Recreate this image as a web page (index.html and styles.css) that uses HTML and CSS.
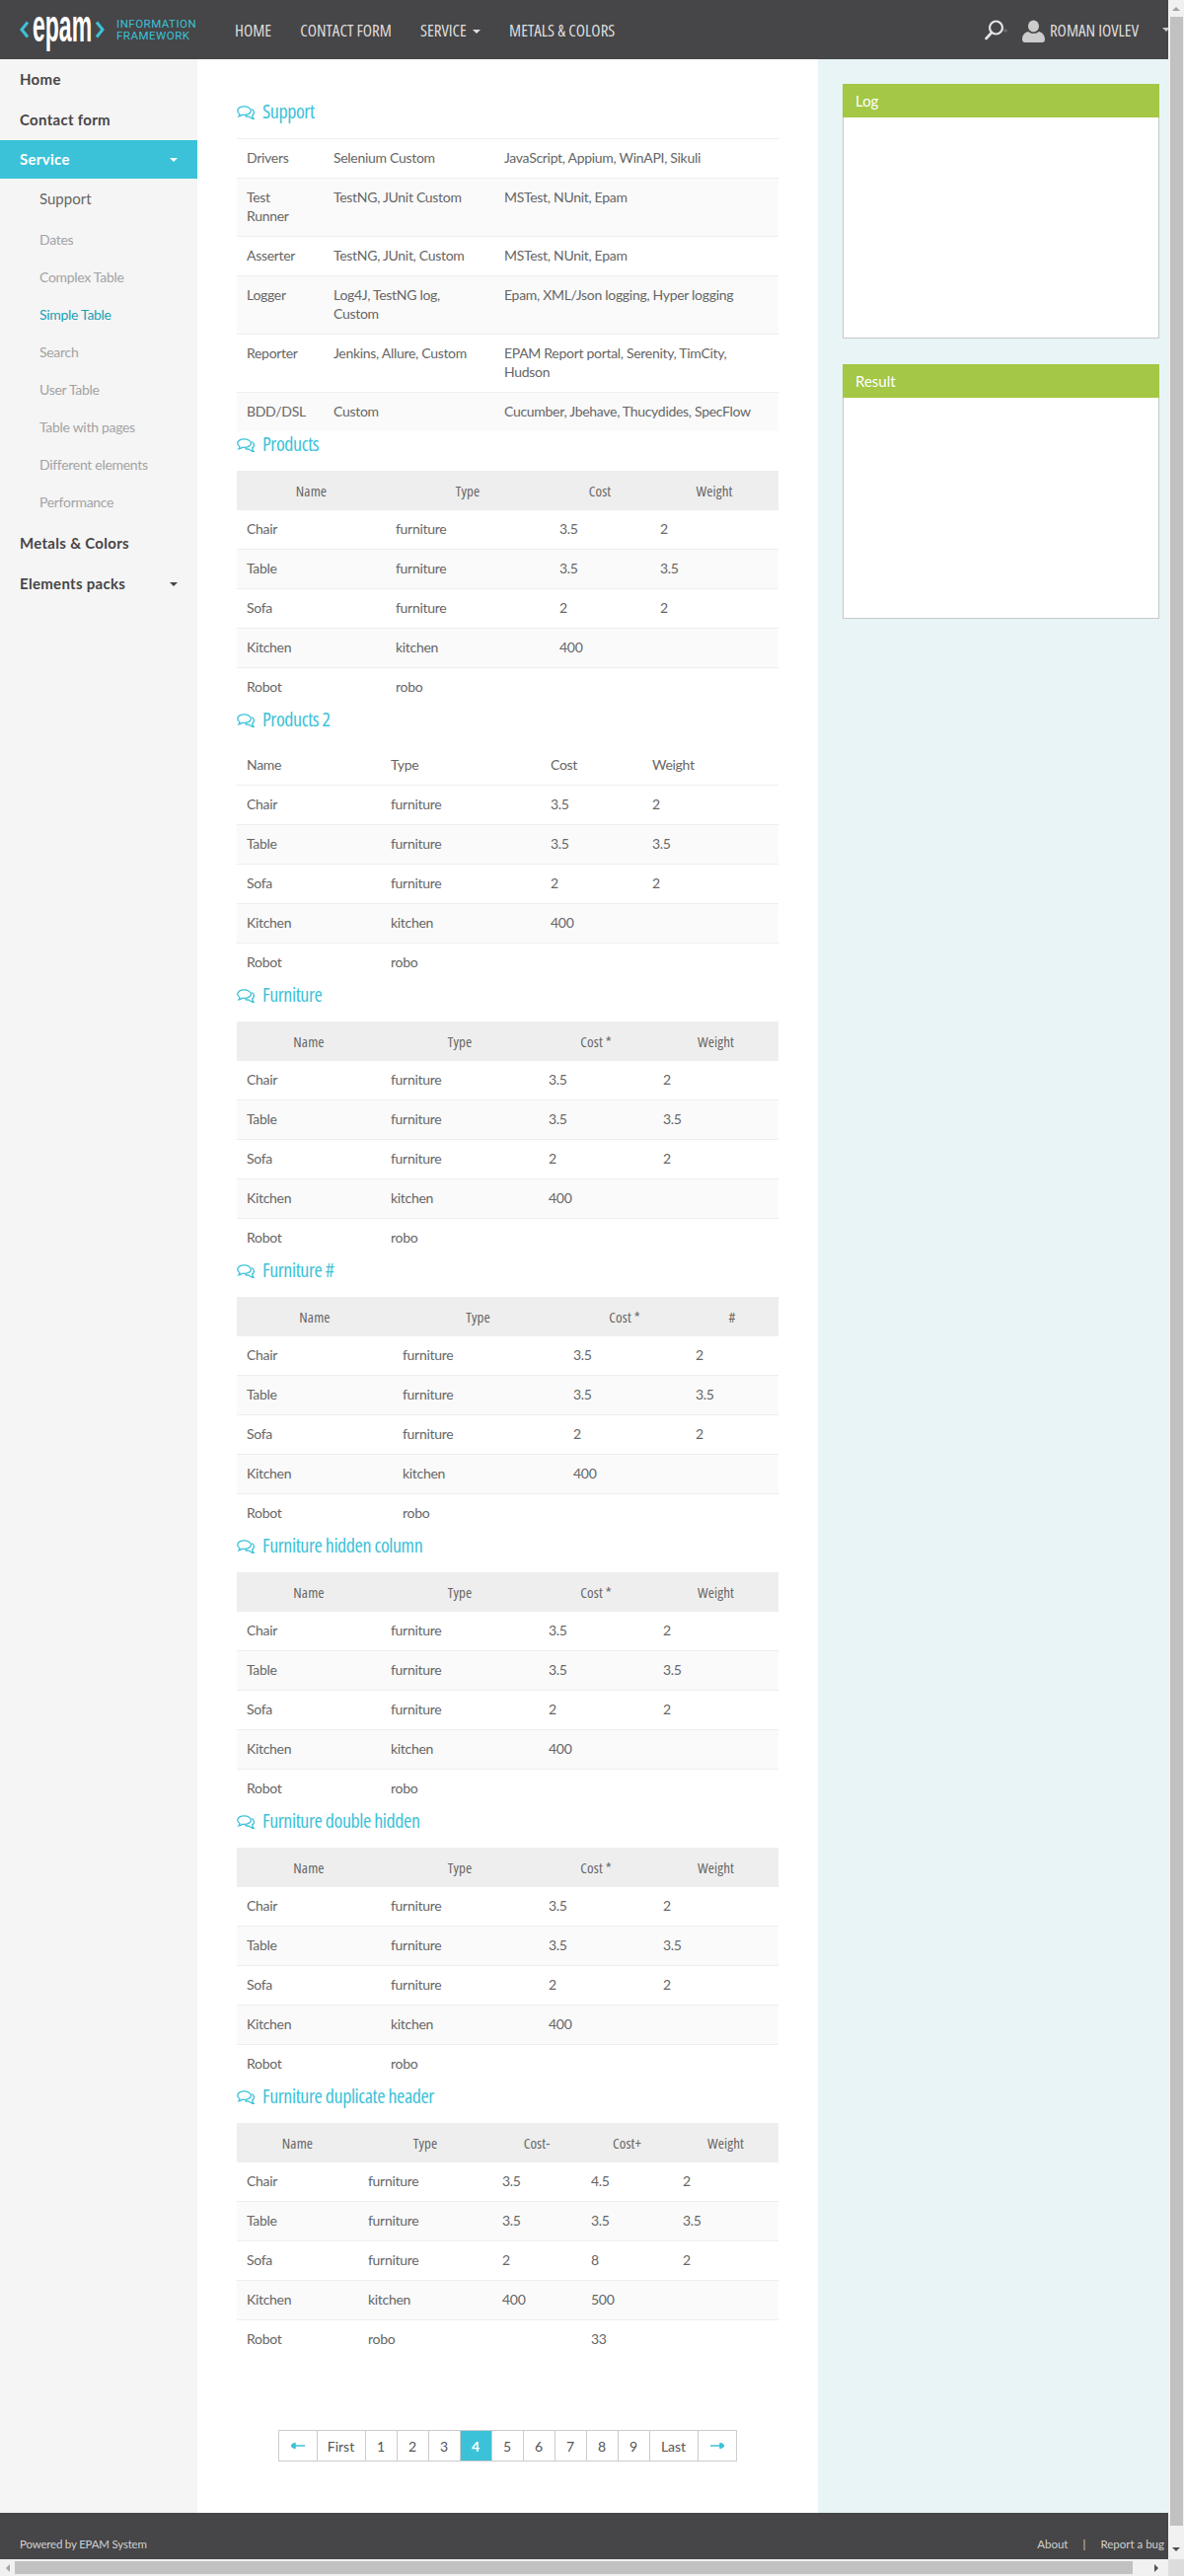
FILE: index.html
```html
<!DOCTYPE html>
<html lang="en">
<head>
    <meta charset="UTF-8">
    <meta name="viewport" content="width=device-width, initial-scale=1.0">
    <title>Simple Table</title>
    <link rel="stylesheet" href="styles.css">
</head>
<body>
<svg class="defs" aria-hidden="true">
    <symbol id="comments" viewBox="0 0 18 14">
        <path d="M7.5 0.8C3.6 0.8 0.7 2.800 0.7 5.200c0 1.300 0.900 2.500 2.300 3.300-0.100 0.900-0.500 1.700-1.100 2.400 1.500-0.200 2.800-0.800 3.700-1.600 0.600 0.100 1.200 0.100 1.900 0.100 3.900 0 6.900-2 6.900-4.200S11.400 0.800 7.500 0.800z" fill="none" stroke="currentColor" stroke-width="1.300"/>
        <path d="M15.200 3.500c1.500 0.900 2.200 2.200 2.200 3.500 0 1.300-0.700 2.400-1.800 3.100 0.100 1.200 0.600 2.300 1.400 3.200-1.900-0.100-3.500-1-4.400-2.200-1.400 0.200-2.900 0-4.100-0.700" fill="none" stroke="currentColor" stroke-width="1.300"/>
    </symbol>
</svg>
<div class="window">
    <div class="page">
        <header class="topbar">
            <div class="logo">
                <svg class="chevron" viewBox="0 0 9 18"><path d="M8 1.500 2 9l6 7.500" fill="none" stroke="#3bc2d8" stroke-width="3"/></svg>
                <span class="logo-box"><span class="logo-word">epam</span></span>
                <svg class="chevron" viewBox="0 0 9 18"><path d="M1 1.500 7 9l-6 7.500" fill="none" stroke="#3bc2d8" stroke-width="3"/></svg>
                <span class="logo-sub">INFORMATION<br>FRAMEWORK</span>
            </div>
            <nav class="topnav">
                <a href="#">Home</a>
                <a href="#">Contact form</a>
                <a href="#">Service <i class="caret"></i></a>
                <a href="#">Metals &amp; Colors</a>
            </nav>
            <div class="topright">
                <svg class="search-icon" viewBox="0 0 23 21">
                    <circle cx="11.500" cy="8" r="6.500" fill="none" stroke="#e4e4e4" stroke-width="2.200"/>
                    <path d="M7 13 1.500 19" stroke="#e4e4e4" stroke-width="2.600" stroke-linecap="round"/>
                    <circle cx="21" cy="11" r="1.800" fill="#6b6b6b"/>
                </svg>
                <svg class="user-icon" viewBox="0 0 23 23">
                    <ellipse cx="11.500" cy="6.500" rx="5.500" ry="6" fill="#ccc"/>
                    <path d="M0 20c0-4.500 2.500-7 6-8 3 2.500 8 2.500 11 0 3.500 1 6 3.500 6 8 0 1.800-1 3-3 3H3c-2 0-3-1.200-3-3z" fill="#ccc"/>
                </svg>
                <span class="user-name">Roman Iovlev</span>
                <i class="caret user-caret"></i>
            </div>
        </header>

        <div class="columns">
            <aside class="sidebar">
                <a class="side-link" href="#">Home</a>
                <a class="side-link" href="#">Contact form</a>
                <a class="side-link active" href="#">Service <i class="caret"></i></a>
                <a class="sub-head" href="#">Support</a>
                <div class="sub-list">
                    <a href="#">Dates</a>
                    <a href="#">Complex Table</a>
                    <a class="current" href="#">Simple Table</a>
                    <a href="#">Search</a>
                    <a href="#">User Table</a>
                    <a href="#">Table with pages</a>
                    <a href="#">Different elements</a>
                    <a href="#">Performance</a>
                </div>
                <a class="side-link" href="#">Metals &amp; Colors</a>
                <a class="side-link" href="#">Elements packs <i class="caret"></i></a>
            </aside>

            <main class="content">
                <h2 class="title"><svg><use href="#comments"/></svg>Support</h2>
                <table class="grid support">
                    <colgroup><col><col><col></colgroup>
                    <tbody>
                        <tr><td>Drivers</td><td>Selenium Custom</td><td>JavaScript, Appium, WinAPI, Sikuli</td></tr>
                        <tr><td>Test Runner</td><td>TestNG, JUnit Custom</td><td>MSTest, NUnit, Epam</td></tr>
                        <tr><td>Asserter</td><td>TestNG, JUnit, Custom</td><td>MSTest, NUnit, Epam</td></tr>
                        <tr><td>Logger</td><td>Log4J, TestNG log, Custom</td><td>Epam, XML/Json logging, Hyper logging</td></tr>
                        <tr><td>Reporter</td><td>Jenkins, Allure, Custom</td><td>EPAM Report portal, Serenity, TimCity, Hudson</td></tr>
                        <tr><td>BDD/DSL</td><td>Custom</td><td>Cucumber, Jbehave, Thucydides, SpecFlow</td></tr>
                    </tbody>
                </table>

                <h2 class="title"><svg><use href="#comments"/></svg>Products</h2>
                <table class="grid products">
                    <colgroup><col><col><col><col></colgroup>
                    <thead><tr><th>Name</th><th>Type</th><th>Cost</th><th>Weight</th></tr></thead>
                    <tbody>
                        <tr><td>Chair</td><td>furniture</td><td>3.5</td><td>2</td></tr>
                        <tr><td>Table</td><td>furniture</td><td>3.5</td><td>3.5</td></tr>
                        <tr><td>Sofa</td><td>furniture</td><td>2</td><td>2</td></tr>
                        <tr><td>Kitchen</td><td>kitchen</td><td>400</td><td></td></tr>
                        <tr><td>Robot</td><td>robo</td><td></td><td></td></tr>
                    </tbody>
                </table>

                <h2 class="title"><svg><use href="#comments"/></svg>Products 2</h2>
                <table class="grid products-two">
                    <colgroup><col><col><col><col></colgroup>
                    <tbody>
                        <tr class="plain-head"><td>Name</td><td>Type</td><td>Cost</td><td>Weight</td></tr>
                    </tbody>
                    <tbody>
                        <tr><td>Chair</td><td>furniture</td><td>3.5</td><td>2</td></tr>
                        <tr><td>Table</td><td>furniture</td><td>3.5</td><td>3.5</td></tr>
                        <tr><td>Sofa</td><td>furniture</td><td>2</td><td>2</td></tr>
                        <tr><td>Kitchen</td><td>kitchen</td><td>400</td><td></td></tr>
                        <tr><td>Robot</td><td>robo</td><td></td><td></td></tr>
                    </tbody>
                </table>

                <h2 class="title"><svg><use href="#comments"/></svg>Furniture</h2>
                <table class="grid furniture">
                    <colgroup><col><col><col><col></colgroup>
                    <thead><tr><th>Name</th><th>Type</th><th>Cost *</th><th>Weight</th></tr></thead>
                    <tbody>
                        <tr><td>Chair</td><td>furniture</td><td>3.5</td><td>2</td></tr>
                        <tr><td>Table</td><td>furniture</td><td>3.5</td><td>3.5</td></tr>
                        <tr><td>Sofa</td><td>furniture</td><td>2</td><td>2</td></tr>
                        <tr><td>Kitchen</td><td>kitchen</td><td>400</td><td></td></tr>
                        <tr><td>Robot</td><td>robo</td><td></td><td></td></tr>
                    </tbody>
                </table>

                <h2 class="title"><svg><use href="#comments"/></svg>Furniture #</h2>
                <table class="grid furniture-num">
                    <colgroup><col><col><col><col></colgroup>
                    <thead><tr><th>Name</th><th>Type</th><th>Cost *</th><th>#</th></tr></thead>
                    <tbody>
                        <tr><td>Chair</td><td>furniture</td><td>3.5</td><td>2</td></tr>
                        <tr><td>Table</td><td>furniture</td><td>3.5</td><td>3.5</td></tr>
                        <tr><td>Sofa</td><td>furniture</td><td>2</td><td>2</td></tr>
                        <tr><td>Kitchen</td><td>kitchen</td><td>400</td><td></td></tr>
                        <tr><td>Robot</td><td>robo</td><td></td><td></td></tr>
                    </tbody>
                </table>

                <h2 class="title"><svg><use href="#comments"/></svg>Furniture hidden column</h2>
                <table class="grid furniture">
                    <colgroup><col><col><col><col></colgroup>
                    <thead><tr><th>Name</th><th>Type</th><th>Cost *</th><th>Weight</th></tr></thead>
                    <tbody>
                        <tr><td>Chair</td><td>furniture</td><td>3.5</td><td>2</td></tr>
                        <tr><td>Table</td><td>furniture</td><td>3.5</td><td>3.5</td></tr>
                        <tr><td>Sofa</td><td>furniture</td><td>2</td><td>2</td></tr>
                        <tr><td>Kitchen</td><td>kitchen</td><td>400</td><td></td></tr>
                        <tr><td>Robot</td><td>robo</td><td></td><td></td></tr>
                    </tbody>
                </table>

                <h2 class="title"><svg><use href="#comments"/></svg>Furniture double hidden</h2>
                <table class="grid furniture">
                    <colgroup><col><col><col><col></colgroup>
                    <thead><tr><th>Name</th><th>Type</th><th>Cost *</th><th>Weight</th></tr></thead>
                    <tbody>
                        <tr><td>Chair</td><td>furniture</td><td>3.5</td><td>2</td></tr>
                        <tr><td>Table</td><td>furniture</td><td>3.5</td><td>3.5</td></tr>
                        <tr><td>Sofa</td><td>furniture</td><td>2</td><td>2</td></tr>
                        <tr><td>Kitchen</td><td>kitchen</td><td>400</td><td></td></tr>
                        <tr><td>Robot</td><td>robo</td><td></td><td></td></tr>
                    </tbody>
                </table>

                <h2 class="title"><svg><use href="#comments"/></svg>Furniture duplicate header</h2>
                <table class="grid duplicate">
                    <colgroup><col><col><col><col><col></colgroup>
                    <thead><tr><th>Name</th><th>Type</th><th>Cost-</th><th>Cost+</th><th>Weight</th></tr></thead>
                    <tbody>
                        <tr><td>Chair</td><td>furniture</td><td>3.5</td><td>4.5</td><td>2</td></tr>
                        <tr><td>Table</td><td>furniture</td><td>3.5</td><td>3.5</td><td>3.5</td></tr>
                        <tr><td>Sofa</td><td>furniture</td><td>2</td><td>8</td><td>2</td></tr>
                        <tr><td>Kitchen</td><td>kitchen</td><td>400</td><td>500</td><td></td></tr>
                        <tr><td>Robot</td><td>robo</td><td></td><td>33</td><td></td></tr>
                    </tbody>
                </table>

                <ul class="pager">
                    <li class="arrow"><svg viewBox="0 0 14 6"><path d="M14 3H3M4 0 0 3l4 3z" fill="#3bc2d8" stroke="#3bc2d8" stroke-width="1.500"/></svg></li>
                    <li class="word">First</li>
                    <li>1</li><li>2</li><li>3</li>
                    <li class="on">4</li>
                    <li>5</li><li>6</li><li>7</li><li>8</li><li>9</li>
                    <li class="word">Last</li>
                    <li class="arrow"><svg viewBox="0 0 14 6"><path d="M0 3h11M10 0l4 3-4 3z" fill="#3bc2d8" stroke="#3bc2d8" stroke-width="1.500"/></svg></li>
                </ul>
            </main>

            <aside class="rightbar">
                <section class="panel">
                    <h3>Log</h3>
                    <div class="panel-body"></div>
                </section>
                <section class="panel">
                    <h3>Result</h3>
                    <div class="panel-body"></div>
                </section>
            </aside>
        </div>

        <footer class="bottombar">
            <span>Powered by EPAM System</span>
            <span class="foot-links"><a href="#">About</a><b>|</b><a href="#">Report a bug</a></span>
        </footer>
    </div>

    <div class="vscroll">
        <i class="tri up"></i>
        <div class="vthumb"></div>
        <i class="tri down"></i>
    </div>
    <div class="hscroll">
        <i class="tri left"></i>
        <div class="hthumb"></div>
        <i class="tri right"></i>
    </div>
    <div class="corner"></div>
</div>
</body>
</html>
```

FILE: styles.css
```css
* {
    box-sizing: border-box;
}
html, body {
    margin: 0;
    padding: 0;
    height: 100%;
    overflow: hidden;
}
body {
    font-family: Lato, "Liberation Sans", sans-serif;
    font-size: 14px;
    line-height: 19px;
    letter-spacing: -0.3px;
    color: #666;
    background: #fff;
}
a {
    color: inherit;
    text-decoration: none;
}
.defs {
    display: none;
}
.window {
    display: grid;
    grid-template-columns: 1184px 16px;
    grid-template-rows: 2593px 17px;
    width: 1200px;
    height: 2610px;
}
.page {
    display: flex;
    flex-direction: column;
    overflow: hidden;
    min-width: 0;
}

/* top bar */
.topbar {
    display: flex;
    align-items: center;
    flex: 0 0 60px;
    background: #464547;
    font-family: "Open Sans", sans-serif;
    font-stretch: 75%;
    letter-spacing: 0;
}
.logo {
    display: flex;
    align-items: center;
    flex: 0 0 238px;
    padding-left: 20px;
}
.chevron {
    flex: none;
    width: 9px;
    height: 18px;
}
.logo-box {
    flex: none;
    width: 68px;
    height: 46px;
    margin-bottom: 8px;
    padding-left: 4px;
}
.logo-word {
    display: inline-block;
    font-family: "Liberation Sans", sans-serif;
    font-size: 46px;
    line-height: 46px;
    font-weight: 700;
    color: #fff;
    transform: scaleX(0.5);
    transform-origin: left center;
}
.logo-sub {
    margin-left: 12px;
    font-family: Roboto, sans-serif;
    font-stretch: 100%;
    font-size: 11.5px;
    line-height: 12px;
    letter-spacing: 0.5px;
    color: #3bc2d8;
}
.topnav {
    display: flex;
    gap: 29px;
    font-size: 17px;
    font-weight: 500;
    text-transform: uppercase;
    color: #ddd;
}
.caret {
    display: inline-block;
    width: 0;
    height: 0;
    margin-left: 3px;
    vertical-align: middle;
    border-top: 4px solid currentColor;
    border-left: 4px solid transparent;
    border-right: 4px solid transparent;
}
.topright {
    display: flex;
    align-items: center;
    margin-left: auto;
    color: #ddd;
}
.search-icon {
    width: 23px;
    height: 21px;
}
.user-icon {
    width: 23px;
    height: 23px;
    margin-left: 15px;
    margin-top: 3px;
}
.user-name {
    margin-left: 5px;
    font-size: 17px;
    font-weight: 500;
    text-transform: uppercase;
}
.user-caret {
    margin-left: 24px;
    margin-right: -2px;
    border-top-color: #ccc;
}

.columns {
    display: flex;
    flex: 1;
    min-height: 0;
}

/* left menu */
.sidebar {
    flex: 0 0 200px;
    background: #f5f5f5;
    display: flex;
    flex-direction: column;
}
.side-link {
    display: flex;
    align-items: center;
    justify-content: space-between;
    height: 41px;
    padding: 0 20px;
    font-size: 15px;
    font-weight: 700;
    letter-spacing: 0.3px;
    color: #464547;
}
.side-link.active {
    height: 39px;
    background: #3bc2d8;
    color: #fff;
}
.sub-head {
    display: flex;
    align-items: center;
    height: 43px;
    padding: 0 0 2px 40px;
    font-size: 15px;
    letter-spacing: 0;
    color: #666;
}
.sub-list {
    margin-bottom: 2px;
}
.sub-list a {
    display: flex;
    align-items: center;
    height: 38px;
    padding: 0 0 1px 40px;
    color: #a3a3a3;
}
.sub-list a.current {
    color: #1a9fb5;
}

/* main column */
.content {
    flex: 0 0 629px;
    padding: 40px 40px 0;
    background: #fff;
}
.title {
    display: flex;
    align-items: flex-start;
    height: 40px;
    margin: 0;
    font-family: "Open Sans", sans-serif;
    font-stretch: 75%;
    font-size: 20px;
    line-height: 26px;
    font-weight: 400;
    letter-spacing: -0.4px;
    color: #3bc2d8;
}
.title svg {
    flex: none;
    width: 18px;
    height: 14px;
    margin: 7px 8px 0 0;
}
.grid {
    width: 549px;
    table-layout: fixed;
    border-collapse: separate;
    border-spacing: 0;
}
.grid td {
    padding: 9px 10px 11px;
    vertical-align: top;
    border-top: 1px solid #eee;
}
.grid tbody tr:first-child td {
    border-top: 0;
}
.grid tbody tr:nth-child(even) td {
    background: #fafafa;
}
.grid th {
    height: 40px;
    padding: 10px;
    font-family: "Open Sans", sans-serif;
    font-stretch: 75%;
    font-size: 15px;
    font-weight: 500;
    line-height: 20px;
    letter-spacing: 0.1px;
    color: #666;
    background: #eee;
}
.support tbody tr:first-child td {
    border-top: 1px solid #eee;
}
.products-two .plain-head td {
    background: none;
}
.products-two tbody + tbody tr:first-child td {
    border-top: 1px solid #eee;
}
.support col:nth-child(1) { width: 88px; }
.support col:nth-child(2) { width: 173px; }
.products col:nth-child(1) { width: 151px; }
.products col:nth-child(2) { width: 166px; }
.products col:nth-child(3) { width: 102px; }
.products-two col:nth-child(1) { width: 146px; }
.products-two col:nth-child(2) { width: 162px; }
.products-two col:nth-child(3) { width: 103px; }
.furniture col:nth-child(1) { width: 146px; }
.furniture col:nth-child(2) { width: 160px; }
.furniture col:nth-child(3) { width: 116px; }
.furniture-num col:nth-child(1) { width: 158px; }
.furniture-num col:nth-child(2) { width: 173px; }
.furniture-num col:nth-child(3) { width: 124px; }
.duplicate col:nth-child(1) { width: 123px; }
.duplicate col:nth-child(2) { width: 136px; }
.duplicate col:nth-child(3) { width: 90px; }
.duplicate col:nth-child(4) { width: 93px; }

/* pagination */
.pager {
    display: flex;
    justify-content: center;
    width: 549px;
    margin: 72px 0 0;
    padding: 0;
    list-style: none;
    letter-spacing: 0;
}
.pager li {
    display: flex;
    align-items: center;
    justify-content: center;
    width: 33px;
    height: 32px;
    margin-left: -1px;
    border: 1px solid #ccc;
    color: #555;
}
.pager .word {
    width: 50px;
}
.pager .arrow {
    width: 40px;
}
.pager .arrow svg {
    width: 14px;
    height: 6px;
}
.pager .on {
    background: #3bc2d8;
    color: #fff;
    font-weight: 700;
}

/* right column */
.rightbar {
    flex: 1;
    padding: 25px 9px 0 25px;
    background: #e8f4f6;
}
.panel {
    margin-bottom: 26px;
}
.panel h3 {
    height: 34px;
    margin: 0;
    padding: 0 13px;
    font-size: 15px;
    font-weight: 400;
    line-height: 34px;
    letter-spacing: 0;
    color: #fff;
    background: #a4c745;
}
.panel-body {
    height: 224px;
    background: #fff;
    border: 1px solid #c7c7c7;
    border-top: 0;
}

/* footer */
.bottombar {
    display: flex;
    align-items: flex-end;
    justify-content: space-between;
    flex: 0 0 47px;
    padding: 0 4px 6px 20px;
    font-size: 11.5px;
    line-height: 18px;
    letter-spacing: -0.2px;
    color: #d0d0d0;
    background: #464547;
}
.foot-links {
    letter-spacing: 0;
}
.foot-links b {
    margin: 0 15px;
    font-weight: 400;
}

/* fake browser scrollbars */
.vscroll {
    display: flex;
    flex-direction: column;
    align-items: center;
    background: #f1f1f1;
}
.vthumb {
    width: 13px;
    height: 2542px;
    margin-top: 6px;
    background: #c1c1c1;
}
.hscroll {
    display: flex;
    align-items: center;
    background: #f1f1f1;
}
.hthumb {
    width: 1133px;
    height: 13px;
    background: #c1c1c1;
}
.corner {
    background: #dcdcdc;
}
.tri {
    display: block;
    flex: none;
    width: 0;
    height: 0;
    border-style: solid;
    border-color: transparent;
}
.tri.up {
    margin-top: 7px;
    border-width: 0 4px 4px;
    border-bottom-color: #a3a3a3;
}
.tri.down {
    margin-top: 22px;
    border-width: 4px 4px 0;
    border-top-color: #505050;
}
.tri.left {
    margin: 0 5px 0 6px;
    border-width: 4px 4px 4px 0;
    border-right-color: #a3a3a3;
}
.tri.right {
    margin-left: 22px;
    border-width: 4px 0 4px 4px;
    border-left-color: #505050;
}
```
